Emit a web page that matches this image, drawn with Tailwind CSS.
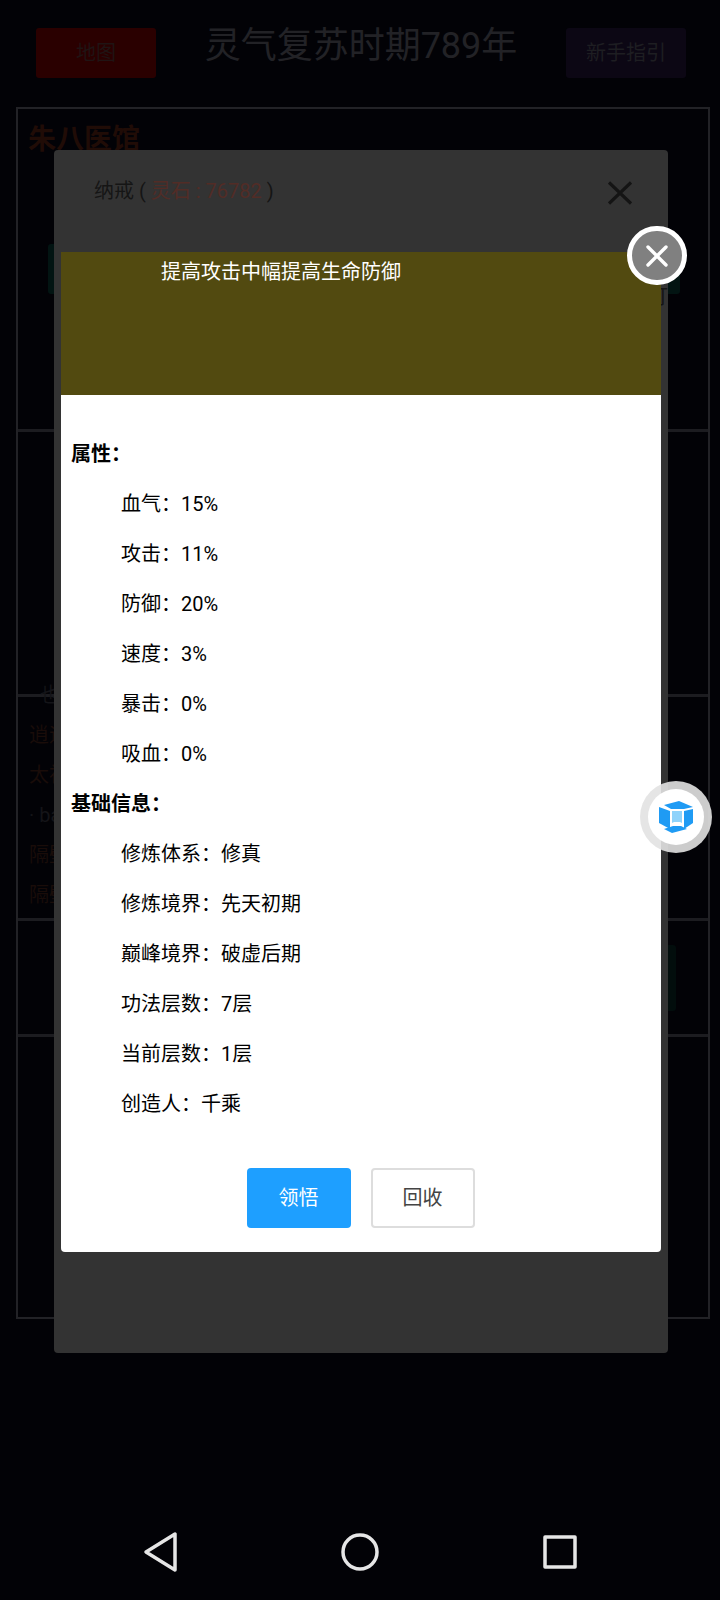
<!DOCTYPE html>
<html lang="zh">
<head>
<meta charset="utf-8">
<script src="https://cdn.jsdelivr.net/npm/@tailwindcss/browser@4"></script>
</head>
<body class="bg-[#020206]">
<div class="relative w-[720px] h-[1600px] overflow-hidden bg-[#020206] font-['Roboto','Noto_Sans_CJK_SC',sans-serif]">

  <!-- dimmed page behind the dialogs -->
  <header class="flex items-start justify-between pl-[36px] pr-[34px] pt-[28px] h-[107px]">
    <button class="w-[120px] h-[50px] rounded-[3px] bg-[#2a0000] text-[20px] text-[#201414]">地图</button>
    <h1 class="text-[36px] leading-[36px] text-[#222226]">灵气复苏时期789年</h1>
    <button class="w-[120px] h-[50px] rounded-[3px] bg-[#0c0714] text-[20px] text-[#1e1e22]">新手指引</button>
  </header>
  <main class="mx-[16px] w-[694px] h-[1212px] border-2 border-[#222226] flex flex-col">
    <section class="h-[323px] shrink-0 border-b-[3px] border-[#1c1c20] px-[10px] pt-[13px]">
      <h2 class="text-[28px] leading-[36px] font-bold text-[#200c06]">朱八医馆</h2>
      <div class="flex justify-between mt-[86px] h-[50px] pl-[20px] pr-[18px]">
        <div class="w-[40px] rounded-[3px] bg-[#021412]"></div>
        <div class="w-[40px] rounded-[3px] bg-[#021412]"></div>
      </div>
    </section>
    <section class="h-[265px] shrink-0 border-b-[3px] border-[#1c1c20]"></section>
    <section class="h-[224px] shrink-0 border-b-[3px] border-[#1c1c20] pl-[11px] text-[20px] leading-[40px] text-[#190c09]">
      <p class="mt-[-22px] pl-[11px] text-[#141418]">也</p><p>逍遥</p><p>太初</p><p class="text-[#141418]">· ba</p><p>隔壁</p><p>隔壁</p>
    </section>
    <section class="h-[116px] shrink-0 border-b-[3px] border-[#1c1c20] flex justify-end pr-[32px] pt-[24px]">
      <div class="w-[40px] h-[66px] rounded-[3px] bg-[#020d0c]"></div>
    </section>
  </main>

  <!-- outer dialog -->
  <div class="absolute left-[54px] top-[150px] w-[614px] h-[1203px] rounded-[4px] bg-[#333333] px-[40px] pt-[27px]">
    <div class="flex items-start justify-between">
      <p class="text-[20px] leading-[28px] text-[#151515]">纳戒 ( <span class="text-[#522c26]">灵石 : 76782</span> )</p>
      <svg class="mr-[-4px] mt-[4px]" width="24" height="24" viewBox="0 0 24 24" fill="none" stroke="#141414" stroke-width="3.2"><path d="M1 1.500 23 22.500M23 1.500 1 22.500"/></svg>
    </div>
    <span class="absolute left-[594px] top-[133px] text-[20px] leading-[28px] text-[#141414]">订</span>
  </div>

  <!-- inner dialog -->
  <div class="absolute left-[61px] top-[252px] w-[600px] h-[1000px] rounded-b-[4px] bg-white flex flex-col">
    <div class="h-[143px] shrink-0 bg-[#524a10] pl-[100px] pt-[5px] text-[20px] leading-[30px] text-white">提高攻击中幅提高生命防御</div>
    <div class="pl-[10px] pt-[34px] text-[20px] leading-[50px] text-black">
      <p class="font-bold">属性：</p>
      <ul class="pl-[50px]">
        <li>血气：15%</li><li>攻击：11%</li><li>防御：20%</li><li>速度：3%</li><li>暴击：0%</li><li>吸血：0%</li>
      </ul>
      <p class="font-bold">基础信息：</p>
      <ul class="pl-[50px]">
        <li>修炼体系：修真</li><li>修炼境界：先天初期</li><li>巅峰境界：破虚后期</li><li>功法层数：7层</li><li>当前层数：1层</li><li>创造人：千乘</li>
      </ul>
    </div>
    <div class="flex justify-center gap-[20px] mt-[39px] ml-[-1px]">
      <button class="w-[104px] h-[60px] rounded-[4px] bg-[#1e9fff] text-[20px] text-white">领悟</button>
      <button class="w-[104px] h-[60px] rounded-[4px] border-2 border-[#dddddd] bg-white text-[20px] text-[#444444]">回收</button>
    </div>
  </div>

  <!-- inner dialog close -->
  <button class="absolute left-[627px] top-[226px] w-[60px] h-[59px] rounded-full border-[5px] border-white bg-[#808080] flex items-center justify-center">
    <svg width="24" height="24" viewBox="0 0 24 24" fill="none" stroke="#ffffff" stroke-width="3.4" stroke-linecap="round"><path d="M3 3 21 21M21 3 3 21"/></svg>
  </button>

  <!-- floating assistant -->
  <div class="absolute left-[640px] top-[781px] w-[72px] h-[72px] rounded-full bg-[#e2e2e2]/90 flex items-center justify-center">
    <div class="w-[56px] h-[56px] rounded-full bg-white flex items-center justify-center">
      <svg width="34" height="32" viewBox="0 0 34 32">
        <path d="M5 4 20 0 34 6 25 8H12Z" fill="#1f9bf4"/>
        <path d="M0 6 11 10V28L0 22Z" fill="#1f9bf4"/>
        <path d="M34 8 25 10V28L34 22Z" fill="#1f9bf4"/>
        <path d="M13 10H23V22L21 21H15L13 22Z" fill="#8fd3fb"/>
        <path d="M14 25H22L28 28 13 32 5 28Z" fill="#1f9bf4"/>
      </svg>
    </div>
  </div>

  <!-- navigation bar -->
  <nav class="absolute left-0 top-[1512px] w-[720px] h-[80px] flex items-center justify-between pl-[143px] pr-[143px]">
    <svg width="36" height="42" viewBox="0 0 36 42" fill="none" stroke="#e6e6e6" stroke-width="3.500" stroke-linejoin="round"><path d="M32 3V39L3 21Z"/></svg>
    <svg class="mr-[2px]" width="38" height="38" viewBox="0 0 38 38" fill="none" stroke="#e6e6e6" stroke-width="3.500"><circle cx="19" cy="19" r="17"/></svg>
    <svg width="34" height="34" viewBox="0 0 34 34" fill="none" stroke="#e6e6e6" stroke-width="3.500" stroke-linejoin="round"><path d="M2 2H32V32H2Z"/></svg>
  </nav>
</div>
</body>
</html>
